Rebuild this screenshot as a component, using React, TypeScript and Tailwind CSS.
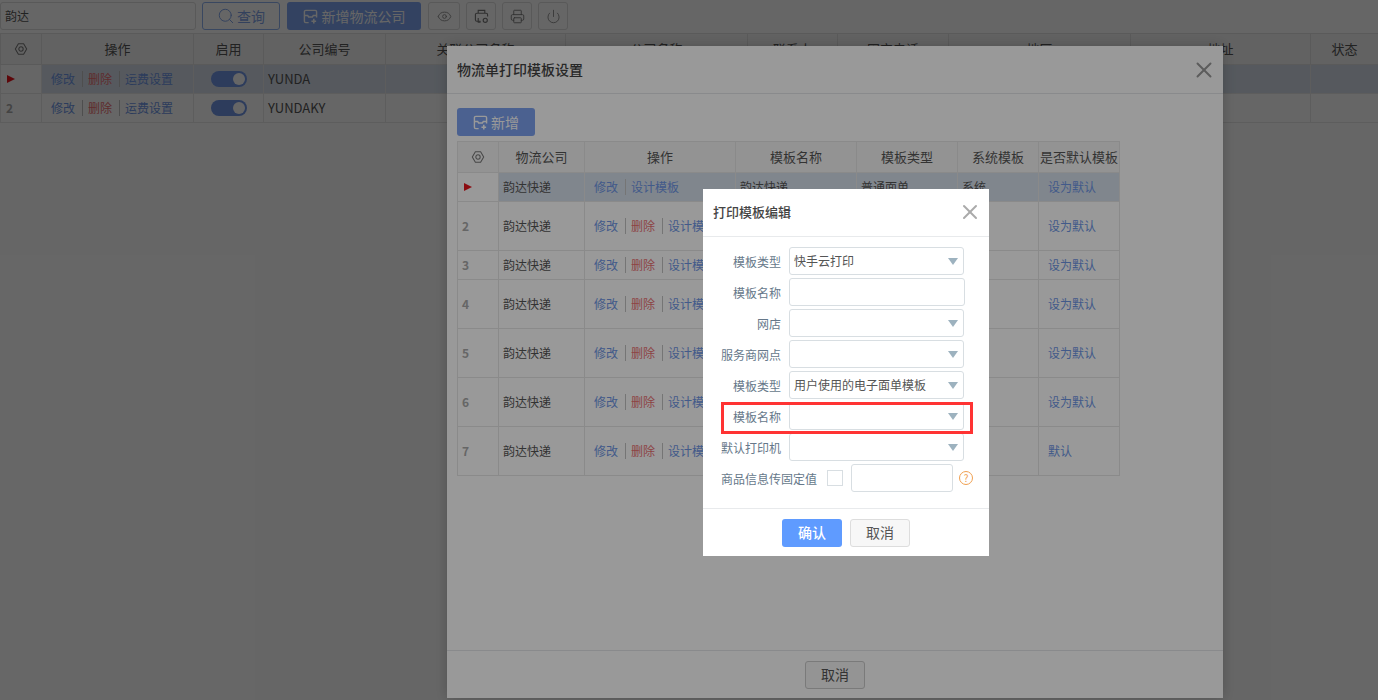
import { Eye, Power, Printer, Search, X } from "lucide-react";

const font = { fontFamily: '"Noto Sans CJK SC", "Liberation Sans", sans-serif' };

function AddIcon({ className }: { className: string }) {
  return (
    <svg viewBox="0 0 16 16" className={className} fill="none" stroke="currentColor" strokeWidth="1.500">
      <path d="M6 14.500H3a1.500 1.500 0 0 1-1.500-1.500V3A1.500 1.500 0 0 1 3 1.500h10A1.500 1.500 0 0 1 14.500 3v6" />
      <path d="M1.500 7h3.500l1 1.500h4l1-1.500h3.500" />
      <path d="M11.500 10.500v5M9 13h5" strokeWidth="1.700" />
    </svg>
  );
}

function GearIcon() {
  return (
    <svg viewBox="0 0 16 16" className="w-[14px] h-[14px] mx-auto text-[#777]" fill="none" stroke="currentColor" strokeWidth="1.200">
      <path d="M5 2h6l3.500 6-3.500 6H5L1.500 8z" strokeLinejoin="round" />
      <circle cx="8" cy="8" r="2.500" />
    </svg>
  );
}

function PrintSetIcon() {
  return (
    <svg viewBox="0 0 16 16" className="w-[15px] h-[15px]" fill="none" stroke="currentColor" strokeWidth="1.200">
      <path d="M4.500 4.500V1.500h7v3M7 13H3a1.500 1.500 0 0 1-1.500-1.500V6A1.500 1.500 0 0 1 3 4.500h10A1.500 1.500 0 0 1 14.500 6v2" />
      <path d="M4.500 9.500V14H7" />
      <circle cx="12" cy="12" r="2.200" />
    </svg>
  );
}

function Caret() {
  return <span className="ml-auto mr-[5px] w-0 h-0 border-x-[5px] border-x-transparent border-t-[7px] border-t-[#9db2bf]" />;
}

function Marker() {
  return <span className="block w-0 h-0 ml-[6px] border-y-[4px] border-y-transparent border-l-[8px] border-l-[#e8141c]" />;
}

function Link({ children, red }: { children: string; red?: boolean }) {
  return <span className={red ? "text-[#ec6f72]" : "text-[#6e96e6]"}>{children}</span>;
}

function Sep() {
  return <span className="inline-block w-px h-[16px] ml-[7px] mr-[5px] bg-[#c4c4c4] align-middle" />;
}

function Actions({ del = true, last }: { del?: boolean; last: string }) {
  return (
    <div className="flex items-center whitespace-nowrap overflow-hidden">
      <Link>修改</Link>
      <Sep />
      {del && (
        <>
          <Link red>删除</Link>
          <Sep />
        </>
      )}
      <Link>{last}</Link>
    </div>
  );
}

function Toggle() {
  return (
    <div className="mx-auto w-[36px] h-[16px] rounded-full bg-[#7096e6] flex items-center justify-end pr-[2px]">
      <span className="w-[12px] h-[12px] rounded-full bg-white" />
    </div>
  );
}

function Select({ value }: { value?: string }) {
  return (
    <div className="w-[175px] h-[28px] border border-[#d8dee2] rounded-[3px] bg-white flex items-center pl-[4px] text-[#555]">
      <span>{value}</span>
      <Caret />
    </div>
  );
}

function FormRow({ label, children }: { label: string; children: React.ReactNode }) {
  return (
    <div className="flex items-center h-[28px]">
      <label className="w-[78px] pt-[2px] text-right text-[#66788a] whitespace-nowrap">{label}</label>
      <div className="ml-[8px]">{children}</div>
    </div>
  );
}

const pageHeads = ["操作", "启用", "公司编号", "关联公司名称", "公司名称", "联系人", "固定电话", "地区", "地址", "状态"];
const pageCols = [41, 152, 70, 122, 180, 182, 90, 111, 182, 180, 68];
const pageRows = ["YUNDA", "YUNDAKY"];

const tplHeads = ["物流公司", "操作", "模板名称", "模板类型", "系统模板", "是否默认模板"];
const tplCols = [41, 86, 151, 121, 101, 81, 81];
const tplRows = [
  { h: "h-[29px]", del: false, def: "设为默认" },
  { h: "h-[49px]", del: true, def: "设为默认" },
  { h: "h-[29px]", del: true, def: "设为默认" },
  { h: "h-[49px]", del: true, def: "设为默认" },
  { h: "h-[49px]", del: true, def: "设为默认" },
  { h: "h-[49px]", del: true, def: "设为默认" },
  { h: "h-[49px]", del: true, def: "默认" },
];

export default function App() {
  return (
    <div className="relative w-[1378px] h-[700px] overflow-hidden bg-white text-[12px] text-[#555]" style={font}>
      {/* toolbar */}
      <div className="flex items-center h-[33px] pt-[2px] pb-[3px]">
        <div className="w-[196px] h-[28px] border border-[#ddd] rounded-[3px] flex items-center pl-[4px]">韵达</div>
        <button className="ml-[6px] w-[78px] h-[28px] border border-[#8fb2f0] rounded-[3px] flex items-center justify-center gap-[2px] text-[14px] text-[#7fa3e8]">
          <Search className="w-[18px] h-[18px]" strokeWidth={1.300} />
          查询
        </button>
        <button className="ml-[7px] w-[134px] h-[28px] rounded-[3px] bg-[#7fa6f2] flex items-center justify-center gap-[4px] text-[14px] text-white">
          <AddIcon className="w-[15px] h-[15px]" />
          新增物流公司
        </button>
        <button className="ml-[7px] w-[32px] h-[28px] border border-[#ddd] rounded-[3px] flex items-center justify-center text-[#888]">
          <Eye className="w-[15px] h-[15px]" strokeWidth={1.400} />
        </button>
        <button className="ml-[6px] w-[30px] h-[28px] border border-[#ddd] rounded-[3px] flex items-center justify-center text-[#777]">
          <PrintSetIcon />
        </button>
        <button className="ml-[6px] w-[30px] h-[28px] border border-[#ddd] rounded-[3px] flex items-center justify-center text-[#777]">
          <Printer className="w-[15px] h-[15px]" strokeWidth={1.400} />
        </button>
        <button className="ml-[6px] w-[30px] h-[28px] border border-[#ddd] rounded-[3px] flex items-center justify-center text-[#888]">
          <Power className="w-[15px] h-[15px]" strokeWidth={1.400} />
        </button>
      </div>

      {/* logistics company table */}
      <table className="table-fixed border-collapse w-[1378px]">
        <colgroup>
          {pageCols.map((w, i) => (
            <col key={i} style={{ width: w }} />
          ))}
        </colgroup>
        <thead>
          <tr className="h-[31px] bg-[#f5f5f5] text-[13px]">
            <th className="border border-[#e2e2e2] font-normal">
              <GearIcon />
            </th>
            {pageHeads.map((h) => (
              <th key={h} className="border border-[#e2e2e2] font-normal">
                {h}
              </th>
            ))}
          </tr>
        </thead>
        <tbody>
          {pageRows.map((code, i) => {
            const hl = i === 0 ? "bg-[#d6dfeb]" : "";
            return (
              <tr key={code} className="h-[29px]">
                <td className="border border-[#e8e8e8] font-bold text-[#aaa]">{i === 0 ? <Marker /> : <span className="pl-[5px]">{i + 1}</span>}</td>
                <td className={`border border-[#e8e8e8] pl-[9px] ${hl}`}>
                  <Actions last="运费设置" />
                </td>
                <td className={`border border-[#e8e8e8] ${hl}`}>
                  <Toggle />
                </td>
                <td className={`border border-[#e8e8e8] pl-[4px] text-[13px] ${hl}`}>{code}</td>
                {Array.from({ length: 7 }).map((_, k) => (
                  <td key={k} className={`border border-[#e8e8e8] ${hl}`} />
                ))}
              </tr>
            );
          })}
        </tbody>
      </table>

      <div className="absolute inset-0 bg-black/33" />

      {/* print template settings modal */}
      <div className="absolute left-[447px] top-[46px] w-[776px] h-[652px] bg-white flex flex-col shadow-[0_0_12px_rgba(0,0,0,0.2)]">
        <div className="h-[48px] shrink-0 border-b border-[#e4e6ea] flex items-center justify-between pl-[10px] pr-[6px]">
          <span className="text-[14px] font-medium text-[#444]">物流单打印模板设置</span>
          <X className="w-[26px] h-[26px] text-[#999]" strokeWidth={1.800} />
        </div>
        <div className="flex-1 pl-[10px] pt-[14px]">
          <button className="w-[78px] h-[28px] rounded-[3px] bg-[#7da2f0] flex items-center justify-center gap-[3px] text-[14px] text-white">
            <AddIcon className="w-[15px] h-[15px]" />
            新增
          </button>
          <table className="table-fixed border-collapse w-[662px] mt-[5px]">
            <colgroup>
              {tplCols.map((w, i) => (
                <col key={i} style={{ width: w }} />
              ))}
            </colgroup>
            <thead>
              <tr className="h-[31px] bg-[#f5f5f5] text-[13px]">
                <th className="border border-[#e6e6e6] font-normal">
                  <GearIcon />
                </th>
                {tplHeads.map((h) => (
                  <th key={h} className="border border-[#e6e6e6] font-normal whitespace-nowrap">
                    {h}
                  </th>
                ))}
              </tr>
            </thead>
            <tbody>
              {tplRows.map((r, i) => {
                const hl = i === 0 ? "bg-[#d6dfeb]" : "";
                return (
                  <tr key={i} className={r.h}>
                    <td className="border border-[#e6e6e6] font-bold text-[#aaa]">{i === 0 ? <Marker /> : <span className="pl-[4px]">{i + 1}</span>}</td>
                    <td className={`border border-[#e6e6e6] pl-[4px] ${hl}`}>韵达快递</td>
                    <td className={`border border-[#e6e6e6] pl-[9px] ${hl}`}>
                      <Actions del={r.del} last="设计模板" />
                    </td>
                    <td className={`border border-[#e6e6e6] pl-[4px] ${hl}`}>韵达快递</td>
                    <td className={`border border-[#e6e6e6] pl-[4px] ${hl}`}>普通面单</td>
                    <td className={`border border-[#e6e6e6] pl-[4px] ${hl}`}>系统</td>
                    <td className={`border border-[#e6e6e6] pl-[9px] text-[#6e96e6] ${hl}`}>{r.def}</td>
                  </tr>
                );
              })}
            </tbody>
          </table>
        </div>
        <div className="h-[48px] shrink-0 border-t border-[#e4e6ea] flex items-center justify-center">
          <button className="w-[60px] h-[28px] border border-[#ccc] rounded-[3px] bg-[#f7f7f7] text-[14px] text-[#555]">取消</button>
        </div>
      </div>

      <div className="absolute inset-0 bg-black/40" />

      {/* template edit dialog */}
      <div className="absolute left-[703px] top-[189px] w-[286px] h-[367px] bg-white flex flex-col">
        <div className="h-[48px] shrink-0 border-b border-[#e8eaec] flex items-center justify-between pl-[10px] pr-[7px] pb-[1px]">
          <span className="text-[13px] font-medium text-[#444]">打印模板编辑</span>
          <X className="w-[24px] h-[24px] text-[#aaa]" strokeWidth={2} />
        </div>
        <div className="relative flex-1 flex flex-col gap-[3px] pt-[10px]">
          <FormRow label="模板类型">
            <Select value="快手云打印" />
          </FormRow>
          <FormRow label="模板名称">
            <div className="w-[176px] h-[28px] border border-[#d8dee2] rounded-[3px]" />
          </FormRow>
          <FormRow label="网店">
            <Select />
          </FormRow>
          <FormRow label="服务商网点">
            <Select />
          </FormRow>
          <FormRow label="模板类型">
            <Select value="用户使用的电子面单模板" />
          </FormRow>
          <FormRow label="模板名称">
            <Select />
          </FormRow>
          <FormRow label="默认打印机">
            <Select />
          </FormRow>
          <div className="flex items-center h-[28px] pl-[18px]">
            <label className="w-[96px] pt-[2px] text-[#66788a] whitespace-nowrap">商品信息传固定值</label>
            <span className="ml-[10px] w-[16px] h-[16px] border border-[#d8dee2]" />
            <span className="ml-[8px] w-[102px] h-[28px] border border-[#d8dee2] rounded-[3px]" />
            <span className="ml-[6px] w-[14px] h-[14px] rounded-full border border-[#f0a050] text-[#f0a050] text-[10px] leading-[12px] text-center">?</span>
          </div>
          {/* red highlight box */}
          <div className="absolute left-[18px] top-[165px] w-[252px] h-[32px] border-[3px] border-[#ff3333] pointer-events-none" />
        </div>
        <div className="h-[48px] shrink-0 border-t border-[#e8eaec] flex items-center justify-center gap-[8px]">
          <button className="w-[60px] h-[28px] rounded-[3px] bg-[#5f9bff] text-[14px] font-medium text-white">确认</button>
          <button className="w-[60px] h-[28px] border border-[#ddd] rounded-[3px] bg-[#f7f7f7] text-[14px] text-[#555]">取消</button>
        </div>
      </div>
    </div>
  );
}
